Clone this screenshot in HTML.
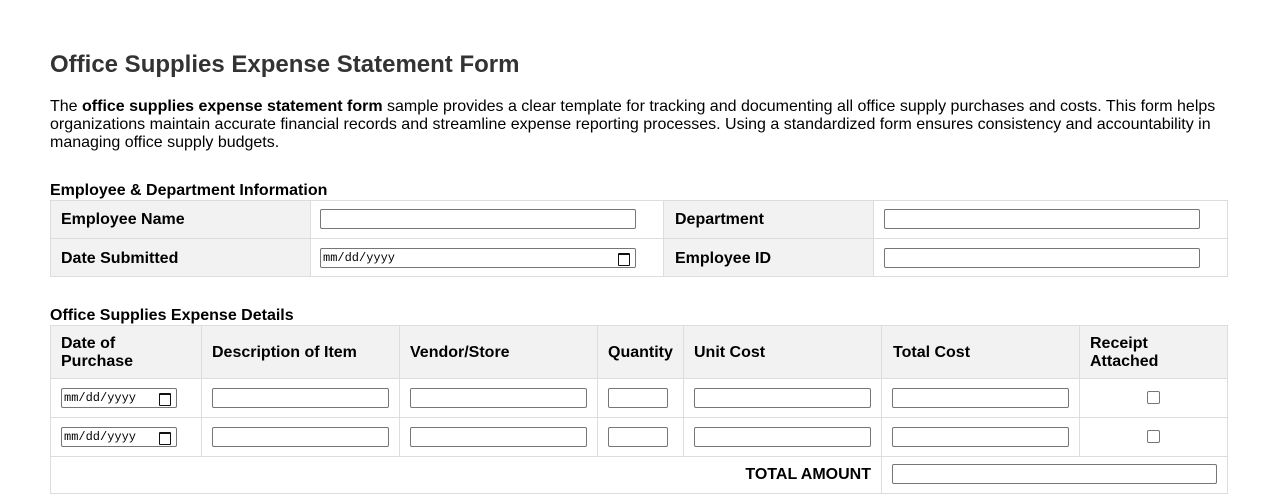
<!DOCTYPE html>
<html><head><meta charset="utf-8"><style>
*{box-sizing:border-box;margin:0;padding:0}
body{width:1278px;height:501px;background:#fff;font-family:"Liberation Sans",Arial,sans-serif;color:#000;position:relative;overflow:hidden}
.a{position:absolute}
h1{position:absolute;left:50px;top:51px;font-size:24px;font-weight:bold;color:#333}
p{position:absolute;left:50px;top:98px;width:1180px;font-size:16px;line-height:18px}
.h{font-size:16px;font-weight:bold}
.c{position:absolute;border:1px solid #ddd}
.g{background:#f2f2f2}
.l{font-size:16px;font-weight:bold;position:absolute;line-height:18px;margin-top:2px}
.i{position:absolute;height:20px;border:1px solid #767676;border-radius:2px;background:#fff}
.d{font-family:"Liberation Mono",monospace;font-size:12px;line-height:19px;padding-left:2px}
.d::after{content:"";position:absolute;right:5px;top:4px;width:10px;height:10px;border:1.5px solid #111;border-top-width:2.5px;border-radius:1px}
.cb{position:absolute;width:13px;height:13px;border:1px solid #767676;border-radius:2px;background:#fff}
</style></head><body>
<h1>Office Supplies Expense Statement Form</h1>
<p>The <b>office supplies expense statement form</b> sample provides a clear template for tracking and documenting all office supply purchases and costs. This form helps organizations maintain accurate financial records and streamline expense reporting processes. Using a standardized form ensures consistency and accountability in managing office supply budgets.</p>
<div class="a h" style="left:50px;top:182px">Employee &amp; Department Information</div>

<div class="c g" style="left:50px;top:200px;width:261px;height:39px"></div>
<div class="c" style="left:310px;top:200px;width:354px;height:39px"></div>
<div class="c g" style="left:663px;top:200px;width:211px;height:39px"></div>
<div class="c" style="left:873px;top:200px;width:355px;height:39px"></div>
<div class="c g" style="left:50px;top:238px;width:261px;height:39px"></div>
<div class="c" style="left:310px;top:238px;width:354px;height:39px"></div>
<div class="c g" style="left:663px;top:238px;width:211px;height:39px"></div>
<div class="c" style="left:873px;top:238px;width:355px;height:39px"></div>
<div class="l" style="left:61px;top:209px">Employee Name</div>
<div class="l" style="left:61px;top:248px">Date Submitted</div>
<div class="l" style="left:675px;top:209px">Department</div>
<div class="l" style="left:675px;top:248px">Employee ID</div>
<div class="i" style="left:320px;top:209px;width:316px"></div>
<div class="i d" style="left:320px;top:248px;width:316px">mm/dd/yyyy</div>
<div class="i" style="left:884px;top:209px;width:316px"></div>
<div class="i" style="left:884px;top:248px;width:316px"></div>

<div class="a h" style="left:50px;top:307px">Office Supplies Expense Details</div>
<div class="c g" style="left:50px;top:325px;width:152px;height:54px"></div>
<div class="c g" style="left:201px;top:325px;width:199px;height:54px"></div>
<div class="c g" style="left:399px;top:325px;width:199px;height:54px"></div>
<div class="c g" style="left:597px;top:325px;width:87px;height:54px"></div>
<div class="c g" style="left:683px;top:325px;width:199px;height:54px"></div>
<div class="c g" style="left:881px;top:325px;width:199px;height:54px"></div>
<div class="c g" style="left:1079px;top:325px;width:149px;height:54px"></div>
<div class="l" style="left:61px;top:333px">Date of<br>Purchase</div>
<div class="l" style="left:212px;top:342px">Description of Item</div>
<div class="l" style="left:410px;top:342px">Vendor/Store</div>
<div class="l" style="left:608px;top:342px">Quantity</div>
<div class="l" style="left:694px;top:342px">Unit Cost</div>
<div class="l" style="left:893px;top:342px">Total Cost</div>
<div class="l" style="left:1090px;top:333px">Receipt<br>Attached</div>
<div class="c" style="left:50px;top:378px;width:152px;height:40px"></div>
<div class="c" style="left:201px;top:378px;width:199px;height:40px"></div>
<div class="c" style="left:399px;top:378px;width:199px;height:40px"></div>
<div class="c" style="left:597px;top:378px;width:87px;height:40px"></div>
<div class="c" style="left:683px;top:378px;width:199px;height:40px"></div>
<div class="c" style="left:881px;top:378px;width:199px;height:40px"></div>
<div class="c" style="left:1079px;top:378px;width:149px;height:40px"></div>
<div class="c" style="left:50px;top:417px;width:152px;height:40px"></div>
<div class="c" style="left:201px;top:417px;width:199px;height:40px"></div>
<div class="c" style="left:399px;top:417px;width:199px;height:40px"></div>
<div class="c" style="left:597px;top:417px;width:87px;height:40px"></div>
<div class="c" style="left:683px;top:417px;width:199px;height:40px"></div>
<div class="c" style="left:881px;top:417px;width:199px;height:40px"></div>
<div class="c" style="left:1079px;top:417px;width:149px;height:40px"></div>
<div class="c" style="left:50px;top:456px;width:832px;height:38px"></div>
<div class="c" style="left:881px;top:456px;width:347px;height:38px"></div>

<div class="i d" style="left:61px;top:388px;width:116px">mm/dd/yyyy</div>
<div class="i" style="left:212px;top:388px;width:177px"></div>
<div class="i" style="left:410px;top:388px;width:177px"></div>
<div class="i" style="left:608px;top:388px;width:60px"></div>
<div class="i" style="left:694px;top:388px;width:177px"></div>
<div class="i" style="left:892px;top:388px;width:177px"></div>
<div class="cb" style="left:1147px;top:391px"></div>
<div class="i d" style="left:61px;top:427px;width:116px">mm/dd/yyyy</div>
<div class="i" style="left:212px;top:427px;width:177px"></div>
<div class="i" style="left:410px;top:427px;width:177px"></div>
<div class="i" style="left:608px;top:427px;width:60px"></div>
<div class="i" style="left:694px;top:427px;width:177px"></div>
<div class="i" style="left:892px;top:427px;width:177px"></div>
<div class="cb" style="left:1147px;top:430px"></div>
<div class="l" style="left:600px;width:271px;text-align:right;top:464px">TOTAL AMOUNT</div>
<div class="i" style="left:892px;top:464px;width:325px"></div>
</body></html>
